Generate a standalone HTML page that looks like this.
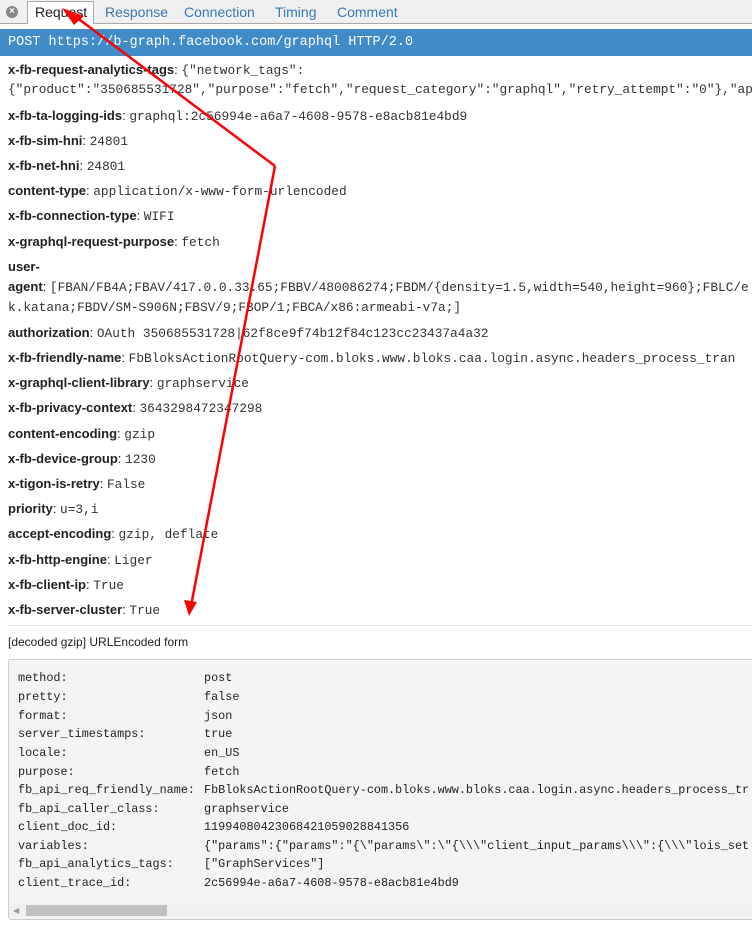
<!DOCTYPE html>
<html><head><style>
body{margin:0;width:752px;height:928px;overflow:hidden;background:#fff;position:relative;font-family:"Liberation Sans",sans-serif;}
.tb{position:absolute;left:0;top:0;width:752px;height:23px;background:#f0f0f0;border-bottom:1px solid #a8a8a8;}
.tab{position:absolute;top:3px;font-size:14px;color:#3a78b5;line-height:18px;}
.x{position:absolute;left:6px;top:6px;width:12px;height:12px;border-radius:50%;background:#888;color:#fff;font-size:10px;line-height:12px;text-align:center;font-weight:bold;}
.blue{position:absolute;left:0;top:29px;width:752px;height:27px;background:#418bc9;color:#fff;font-family:"Liberation Mono",monospace;font-size:13.5px;line-height:27px;padding-left:8px;white-space:nowrap;}
.r{position:absolute;left:8px;white-space:nowrap;font-size:13px;line-height:16px;color:#222;}
.r b{font-family:"Liberation Sans",sans-serif;}
.m{font-family:"Liberation Mono",monospace;font-size:12.8px;color:#333;}
.box{position:absolute;left:8px;top:659px;width:760px;height:259px;background:#f4f4f4;border:1px solid #ccc;border-radius:3px;}
.c{position:absolute;left:18px;white-space:nowrap;font-family:"Liberation Mono",monospace;font-size:11.8px;line-height:16px;color:#222;}
.c span{position:absolute;left:186px;}
</style></head><body>
<div class="tb"></div>
<div class="x">×</div>
<div style="position:absolute;left:27px;top:1px;width:65px;height:22px;background:#fff;border:1px solid #aaa;border-bottom:none;"></div>
<div class="tab" style="left:35px;color:#222">Request</div>
<div class="tab" style="left:105px">Response</div>
<div class="tab" style="left:184px">Connection</div>
<div class="tab" style="left:275px">Timing</div>
<div class="tab" style="left:337px">Comment</div>
<div class="blue">POST https://b-graph.facebook.com/graphql HTTP/2.0</div>

<div class="r" style="top:62px"><b>x-fb-request-analytics-tags</b>: <span class="m">{"network_tags":</span></div>
<div class="r m" style="top:82px">{"product":"350685531728","purpose":"fetch","request_category":"graphql","retry_attempt":"0"},"ap</div>
<div class="r" style="top:108px"><b>x-fb-ta-logging-ids</b>: <span class="m">graphql:2c56994e-a6a7-4608-9578-e8acb81e4bd9</span></div>
<div class="r" style="top:133px"><b>x-fb-sim-hni</b>: <span class="m">24801</span></div>
<div class="r" style="top:158px"><b>x-fb-net-hni</b>: <span class="m">24801</span></div>
<div class="r" style="top:183px"><b>content-type</b>: <span class="m">application/x-www-form-urlencoded</span></div>
<div class="r" style="top:208px"><b>x-fb-connection-type</b>: <span class="m">WIFI</span></div>
<div class="r" style="top:234px"><b>x-graphql-request-purpose</b>: <span class="m">fetch</span></div>
<div class="r" style="top:259px"><b>user-</b></div>
<div class="r" style="top:279px"><b>agent</b>: <span class="m">[FBAN/FB4A;FBAV/417.0.0.33.65;FBBV/480086274;FBDM/{density=1.5,width=540,height=960};FBLC/e</span></div>
<div class="r m" style="top:300px">k.katana;FBDV/SM-S906N;FBSV/9;FBOP/1;FBCA/x86:armeabi-v7a;]</div>
<div class="r" style="top:325px"><b>authorization</b>: <span class="m">OAuth 350685531728|62f8ce9f74b12f84c123cc23437a4a32</span></div>
<div class="r" style="top:350px"><b>x-fb-friendly-name</b>: <span class="m">FbBloksActionRootQuery-com.bloks.www.bloks.caa.login.async.headers_process_tran</span></div>
<div class="r" style="top:375px"><b>x-graphql-client-library</b>: <span class="m">graphservice</span></div>
<div class="r" style="top:400px"><b>x-fb-privacy-context</b>: <span class="m">3643298472347298</span></div>
<div class="r" style="top:426px"><b>content-encoding</b>: <span class="m">gzip</span></div>
<div class="r" style="top:451px"><b>x-fb-device-group</b>: <span class="m">1230</span></div>
<div class="r" style="top:476px"><b>x-tigon-is-retry</b>: <span class="m">False</span></div>
<div class="r" style="top:501px"><b>priority</b>: <span class="m">u=3,i</span></div>
<div class="r" style="top:526px"><b>accept-encoding</b>: <span class="m">gzip, deflate</span></div>
<div class="r" style="top:552px"><b>x-fb-http-engine</b>: <span class="m">Liger</span></div>
<div class="r" style="top:577px"><b>x-fb-client-ip</b>: <span class="m">True</span></div>
<div class="r" style="top:602px"><b>x-fb-server-cluster</b>: <span class="m">True</span></div>
<div style="position:absolute;left:8px;top:625px;width:744px;height:1px;background:#e8e8e8"></div>
<div class="r" style="top:634px;font-size:12px;color:#222">[decoded gzip] URLEncoded form</div>

<div class="box"></div>
<div class="c" style="top:670px">method:<span>post</span></div>
<div class="c" style="top:689px">pretty:<span>false</span></div>
<div class="c" style="top:708px">format:<span>json</span></div>
<div class="c" style="top:726px">server_timestamps:<span>true</span></div>
<div class="c" style="top:745px">locale:<span>en_US</span></div>
<div class="c" style="top:764px">purpose:<span>fetch</span></div>
<div class="c" style="top:782px">fb_api_req_friendly_name:<span>FbBloksActionRootQuery-com.bloks.www.bloks.caa.login.async.headers_process_tr</span></div>
<div class="c" style="top:801px">fb_api_caller_class:<span>graphservice</span></div>
<div class="c" style="top:819px">client_doc_id:<span>11994080423068421059028841356</span></div>
<div class="c" style="top:838px">variables:<span>{"params":{"params":"{\"params\":\"{\\\"client_input_params\\\":{\\\"lois_set</span></div>
<div class="c" style="top:856px">fb_api_analytics_tags:<span>["GraphServices"]</span></div>
<div class="c" style="top:875px">client_trace_id:<span>2c56994e-a6a7-4608-9578-e8acb81e4bd9</span></div>
<div style="position:absolute;left:9px;top:903px;width:743px;height:14px;background:#f0f0f0"></div>
<div style="position:absolute;left:26px;top:905px;width:141px;height:11px;background:#c0c0c0"></div>
<div style="position:absolute;left:13px;top:906px;font-size:8px;color:#999">◀</div>

<svg style="position:absolute;left:0;top:0" width="752" height="928">
<g stroke="#f00" stroke-width="2.5" fill="none">
<line x1="275" y1="166" x2="72" y2="14"/>
<line x1="275" y1="166" x2="191" y2="606"/>
</g>
<polygon points="62,8 84,16 74,25" fill="#f00"/>
<polygon points="189,616 184,600 197,602" fill="#f00"/>
</svg>
</body></html>
